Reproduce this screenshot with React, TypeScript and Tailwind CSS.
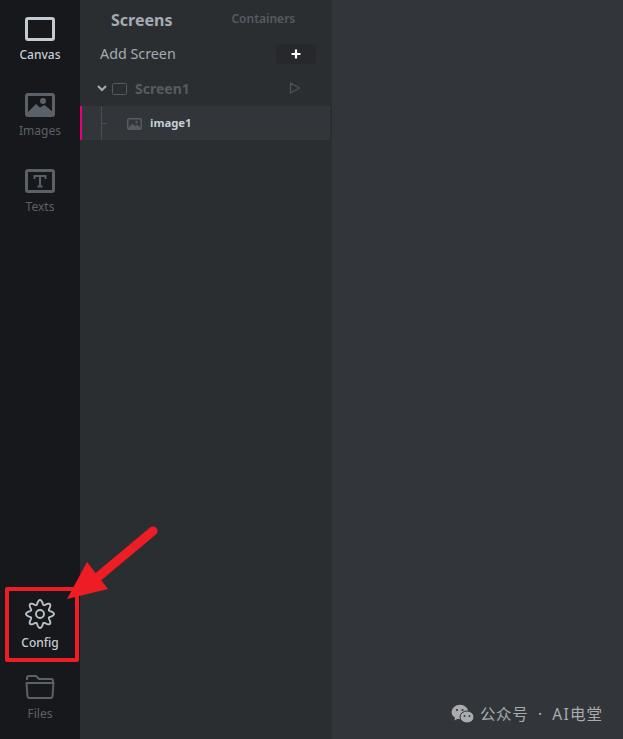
import React from "react";

function NavItem({ label, active, icon, className }: { label: string; active?: boolean; icon: React.ReactNode; className?: string }) {
  return (
    <div className={`flex flex-col items-center ${className ?? ""}`}>
      {icon}
      <span className={`text-[12px] leading-[16px] mt-[6px] ${active ? "text-[#c6cdd4] font-medium" : "text-[#5b6168]"}`}>{label}</span>
    </div>
  );
}

const gearPath = (() => {
  const pts: string[] = [];
  for (let i = 0; i < 160; i++) {
    const t = (i / 160) * Math.PI * 2;
    const r = 11.8 + 2.2 * Math.cos(8 * t);
    pts.push(`${(15 + r * Math.sin(t)).toFixed(2)} ${(15 - r * Math.cos(t)).toFixed(2)}`);
  }
  return `M${pts.join("L")}Z`;
})();

export default function App() {
  return (
    <div className="relative flex w-[623px] h-[739px] overflow-hidden bg-[#32353a] font-['Noto_Sans','Open_Sans','Noto_Sans_CJK_SC',sans-serif]">
      <aside className="w-[80px] shrink-0 bg-[#16181b] flex flex-col items-center">
        <NavItem
          label="Canvas"
          active
          className="mt-[17px]"
          icon={
            <svg width="30" height="24" viewBox="0 0 30 24">
              <rect x="1.5" y="1.5" width="27" height="21" rx="1.5" fill="none" stroke="#c3cad1" strokeWidth="3" />
            </svg>
          }
        />
        <NavItem
          label="Images"
          className="mt-[30px]"
          icon={
            <svg width="30" height="24" viewBox="0 0 30 24">
              <rect x="1.5" y="1.5" width="27" height="21" rx="1.5" fill="#16181b" stroke="#5b6168" strokeWidth="3" />
              <path d="M2 20 L11 11 L15 14.5 L19.5 12 L28 19 L28 23 L2 23 Z" fill="#5b6168" />
              <circle cx="18" cy="8" r="3" fill="#5b6168" />
            </svg>
          }
        />
        <NavItem
          label="Texts"
          className="mt-[30px]"
          icon={
            <svg width="30" height="24" viewBox="0 0 30 24">
              <rect x="1.5" y="1.5" width="27" height="21" rx="1.5" fill="none" stroke="#5b6168" strokeWidth="3" />
              <path d="M9.5 10 V7 H20.5 V10 M15 7 V17.5 M12.5 17.5 H17.5" fill="none" stroke="#5b6168" strokeWidth="2" />
            </svg>
          }
        />
        <div className="flex-1" />
        <NavItem
          label="Config"
          active
          icon={
            <svg width="30" height="30" viewBox="0 0 30 30" fill="none" stroke="#b8bfc6" strokeWidth="1.9">
              <path d={gearPath} strokeLinejoin="round" />
              <circle cx="15" cy="15" r="4" />
            </svg>
          }
        />
        <NavItem
          label="Files"
          className="mt-[23px] mb-[17px]"
          icon={
            <svg width="30" height="26" viewBox="0 0 30 26" fill="none" stroke="#5b6168" strokeWidth="2" strokeLinejoin="round">
              <path d="M2 6 V4 Q2 2 4 2 H11 L14 5 H26 Q28 5 28 7 V9" />
              <path d="M1.5 9 H28.5 L27.5 22 Q27.3 24 25.5 24 H4.5 Q2.7 24 2.5 22 Z" />
            </svg>
          }
        />
      </aside>

      <section className="w-[250px] shrink-0 bg-[#2b2e31] flex flex-col">
        <div className="flex items-center h-[38px] pl-[31px]">
          <span className="text-[16px] leading-[24px] mt-[1px] font-bold text-[#a4abb2]">Screens</span>
          <span className="ml-[59px] text-[12px] font-semibold text-[#565b61]">Containers</span>
        </div>
        <div className="flex items-center justify-between h-[32px] pl-[20px] pr-[14px]">
          <span className="text-[14.3px] leading-[30px] text-[#a4abb2]">Add Screen</span>
          <div className="flex w-[40px] h-[20px] items-center justify-center rounded-[3px] bg-[#26282c]">
            <svg width="10" height="10" viewBox="0 0 10 10">
              <path d="M5 0.5 V9.5 M0.5 5 H9.5" stroke="#fff" strokeWidth="2.2" />
            </svg>
          </div>
        </div>
        <div className="flex items-center h-[36px] pl-[17px] pr-[29px]">
          <svg width="10" height="7" viewBox="0 0 10 7" className="shrink-0">
            <path d="M1 1 L5 5 L9 1" fill="none" stroke="#a4abb2" strokeWidth="2" />
          </svg>
          <svg width="15" height="12" viewBox="0 0 15 12" className="ml-[5px] shrink-0 mt-[2px]">
            <rect x="0.5" y="0.5" width="14" height="11" rx="1" fill="none" stroke="#55595f" />
          </svg>
          <span className="ml-[8px] text-[14px] font-bold text-[#565b61]">Screen1</span>
          <svg width="12" height="12" viewBox="0 0 12 12" className="ml-auto">
            <path d="M1.5 1 L10.5 6 L1.5 11 Z" fill="none" stroke="#4f5359" strokeWidth="1.3" strokeLinejoin="round" />
          </svg>
        </div>
        <div className="relative flex items-center h-[34px] bg-[#32353a] border-l-2 border-[#e6007e] pl-[45px]">
          <svg width="15" height="12" viewBox="0 0 15 12" className="shrink-0 mt-[1px]">
            <rect x="0.75" y="0.75" width="13.5" height="10.5" rx="1" fill="#32353a" stroke="#565b61" strokeWidth="1.5" />
            <path d="M1 10 L5.5 5.5 L8 8 L10 6.5 L14 10 V11 H1 Z" fill="#565b61" />
            <circle cx="9.5" cy="4" r="1.3" fill="#565b61" />
          </svg>
          <span className="ml-[8px] mt-[1px] text-[11.3px] font-bold text-[#c6cdd4]">image1</span>
          <div className="absolute left-[19px] top-0 bottom-0 w-px bg-[#494d52]" />
          <div className="absolute left-[19px] top-[17px] w-[6px] h-px bg-[#494d52]" />
        </div>
      </section>

      <div className="w-[2px] shrink-0 bg-[#2b2e31]" />
      <main className="flex-1 bg-[#32353a]" />

      {/* red annotation */}
      <div className="absolute left-[5px] top-[587px] w-[74px] h-[75px] border-[4px] border-[#ee1c25] rounded-[2px]" />
      <svg className="absolute left-0 top-0" width="623" height="739" viewBox="0 0 623 739">
        <path d="M153 531 L98 577" stroke="#ee1c25" strokeWidth="9" strokeLinecap="round" />
        <path d="M87 562 L108 589 L67 599 Z" fill="#ee1c25" />
      </svg>

      {/* watermark */}
      <div className="absolute left-[451px] top-[702px] flex items-center">
        <svg width="24" height="20" viewBox="0 0 24 20">
          <ellipse cx="9" cy="8" rx="8.5" ry="7.2" fill="#a9abad" />
          <path d="M4 13 L3.5 16.5 L8 14 Z" fill="#a9abad" />
          <ellipse cx="16" cy="13" rx="7" ry="6" fill="#a9abad" stroke="#32353a" strokeWidth="1" />
          <circle cx="6" cy="6" r="1.1" fill="#32353a" />
          <circle cx="11.5" cy="6" r="1.1" fill="#32353a" />
          <circle cx="13.5" cy="12" r="0.9" fill="#32353a" />
          <circle cx="18.5" cy="12" r="0.9" fill="#32353a" />
        </svg>
        <span className="ml-[5px] text-[15.5px] leading-[24px] tracking-[0.6px] [word-spacing:5px] text-[#a9abad]">
          公众号 · <span className="tracking-[1.2px]">AI电堂</span>
        </span>
      </div>
    </div>
  );
}
